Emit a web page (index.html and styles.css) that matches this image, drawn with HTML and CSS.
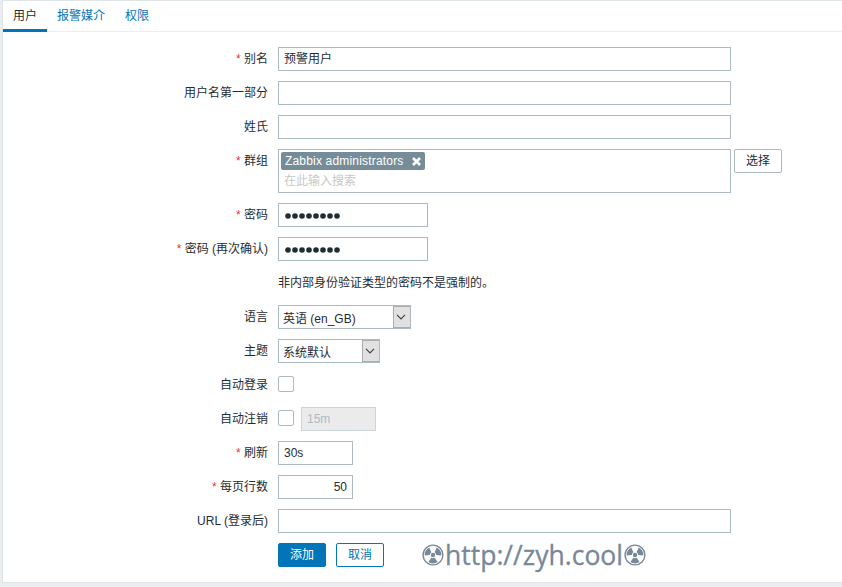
FILE: index.html
```html
<!DOCTYPE html>
<html lang="zh-CN">
<head>
<meta charset="utf-8">
<title>用户</title>
<link rel="stylesheet" href="styles.css">
</head>
<body>
<svg width="0" height="0" class="defs">
  <symbol id="rad" viewBox="0 0 22 22">
    <circle cx="11" cy="11" r="9.9" fill="none" stroke="currentColor" stroke-width="1.4"/>
    <circle cx="11" cy="11" r="2.2" fill="currentColor"/>
    <path id="blade" fill="currentColor" d="M9.4 13.8 L6.4 18 Q11 20.8 15.6 18 L12.6 13.8 Q11 14.7 9.4 13.8Z"/>
    <use href="#blade" transform="rotate(120 11 11)"/>
    <use href="#blade" transform="rotate(240 11 11)"/>
  </symbol>
  <symbol id="dots" viewBox="0 0 56 6">
    <g fill="#1f2c33">
      <circle cx="3" cy="3" r="2.8"/><circle cx="10" cy="3" r="2.8"/><circle cx="17" cy="3" r="2.8"/><circle cx="24" cy="3" r="2.8"/>
      <circle cx="31" cy="3" r="2.8"/><circle cx="38" cy="3" r="2.8"/><circle cx="45" cy="3" r="2.8"/><circle cx="52" cy="3" r="2.8"/>
    </g>
  </symbol>
</svg>
<main class="panel">
  <nav class="tabs">
    <a class="tab active">用户</a><a class="tab">报警媒介</a><a class="tab">权限</a>
  </nav>
  <form class="form">
    <div class="row"><label class="req">别名</label><div class="field wide">预警用户</div></div>
    <div class="row"><label>用户名第一部分</label><div class="field wide"></div></div>
    <div class="row"><label>姓氏</label><div class="field wide"></div></div>
    <div class="row">
      <label class="req">群组</label>
      <div class="multi wide">
        <span class="chip"><span class="chip-text">Zabbix administrators</span><svg width="9" height="9" viewBox="0 0 9 9"><path d="M1 1 8 8M8 1 1 8" stroke="#fff" stroke-width="2.6"/></svg></span>
        <span class="hint">在此输入搜索</span>
      </div>
      <button type="button" class="btn select-btn">选择</button>
    </div>
    <div class="row"><label class="req">密码</label><div class="field pass"><svg width="56" height="6"><use href="#dots"/></svg></div></div>
    <div class="row"><label class="req">密码 (再次确认)</label><div class="field pass"><svg width="56" height="6"><use href="#dots"/></svg></div></div>
    <div class="row"><label></label><div class="note">非内部身份验证类型的密码不是强制的。</div></div>
    <div class="row"><label>语言</label><div class="select lang"><span>英语 (en_GB)</span><b><svg width="10" height="6" viewBox="0 0 10 6"><path d="M1 .8 5 4.8 9 .8" fill="none" stroke="#444" stroke-width="1.2"/></svg></b></div></div>
    <div class="row"><label>主题</label><div class="select theme"><span>系统默认</span><b><svg width="10" height="6" viewBox="0 0 10 6"><path d="M1 .8 5 4.8 9 .8" fill="none" stroke="#444" stroke-width="1.2"/></svg></b></div></div>
    <div class="row"><label>自动登录</label><span class="check"></span></div>
    <div class="row"><label>自动注销</label><span class="check"></span><div class="field small disabled">15m</div></div>
    <div class="row"><label class="req">刷新</label><div class="field small">30s</div></div>
    <div class="row"><label class="req">每页行数</label><div class="field small num">50</div></div>
    <div class="row"><label>URL (登录后)</label><div class="field wide"></div></div>
    <div class="row"><label></label><button type="button" class="btn primary">添加</button><button type="button" class="btn outline">取消</button>
      <div class="mark"><svg width="22" height="22"><use href="#rad"/></svg><span>http://zyh.cool</span><svg width="22" height="22"><use href="#rad"/></svg></div>
    </div>
  </form>
</main>
</body>
</html>
```
FILE: styles.css
```css
* { box-sizing: border-box; }
body {
  margin: 0;
  height: 587px;
  padding-left: 2px;
  overflow: hidden;
  background: #ebeef0;
  color: #1f2c33;
  font: 12px/24px "Liberation Sans", "Noto Sans CJK SC", sans-serif;
}
.defs { position: absolute; }
.panel {
  height: 583px;
  background: #fff;
  border: 1px solid #dfe4e7;
  border-right: 0;
}
.tabs { display: flex; height: 31px; border-bottom: 1px solid #ebeef0; }
.tab { height: 31px; padding: 0 10px; line-height: 31px; color: #0275b8; }
.active { color: #1f2c33; border-bottom: 3px solid #0275b8; }
.form { display: flex; flex-direction: column; gap: 10px; padding-top: 15px; }
.row { display: flex; min-height: 24px; white-space: nowrap; }
label { width: 265px; margin-right: 10px; height: 24px; text-align: right; }
.req::before { content: "* "; color: #e33734; }
.field { height: 24px; padding: 0 5px; line-height: 22px; border: 1px solid #acbbc2; background: #fff; }
.wide { width: 453px; }
.small { width: 75px; }
.num { text-align: right; }
.disabled { margin-left: 7px; background: #ebebeb; color: #acbbc2; border-color: #ccd5d9; }
.multi { height: 44px; padding: 2px; border: 1px solid #acbbc2; }
.chip {
  display: flex;
  align-items: center;
  justify-content: space-between;
  width: 144px;
  height: 18px;
  padding: 0 4px;
  border-radius: 2px;
  background: #768d99;
  color: #fff;
  line-height: 18px;
}
.chip-text { letter-spacing: .18px; }
.hint { display: block; padding-left: 3px; line-height: 22px; color: #c8c8c8; }
.btn {
  width: 48px;
  height: 24px;
  padding: 0;
  font: inherit;
  line-height: 22px;
  border: 1px solid #acbbc2;
  border-radius: 2px;
  background: #fff;
  color: #1f2c33;
}
.select-btn { margin-left: 3px; }
.primary { background: #0275b8; border-color: #0275b8; color: #fff; }
.outline { margin-left: 10px; border-color: #0275b8; color: #0275b8; }
.pass { display: flex; align-items: center; width: 150px; padding: 2px 6px 0; }
.select { display: flex; justify-content: space-between; height: 24px; padding-left: 4px; border: 1px solid #acbbc2; line-height: 26px; }
.select b { display: flex; align-items: center; justify-content: center; width: 17px; height: 22px; padding-right: 2px; border: 1px solid #adadad; border-right: 0; background: #e1e1e1; }
.select svg { flex: none; }
.lang { width: 133px; }
.theme { width: 102px; }
.check { width: 16px; height: 16px; margin-top: 3px; border: 1px solid #acbbc2; border-radius: 2px; }
.mark { display: flex; align-items: center; margin-left: 38px; height: 24px; color: #778899; font: 26.5px/24px "Open Sans", sans-serif; }
.mark span { width: 180px; display: flex; justify-content: center; -webkit-text-stroke: .3px #778899; }
```
